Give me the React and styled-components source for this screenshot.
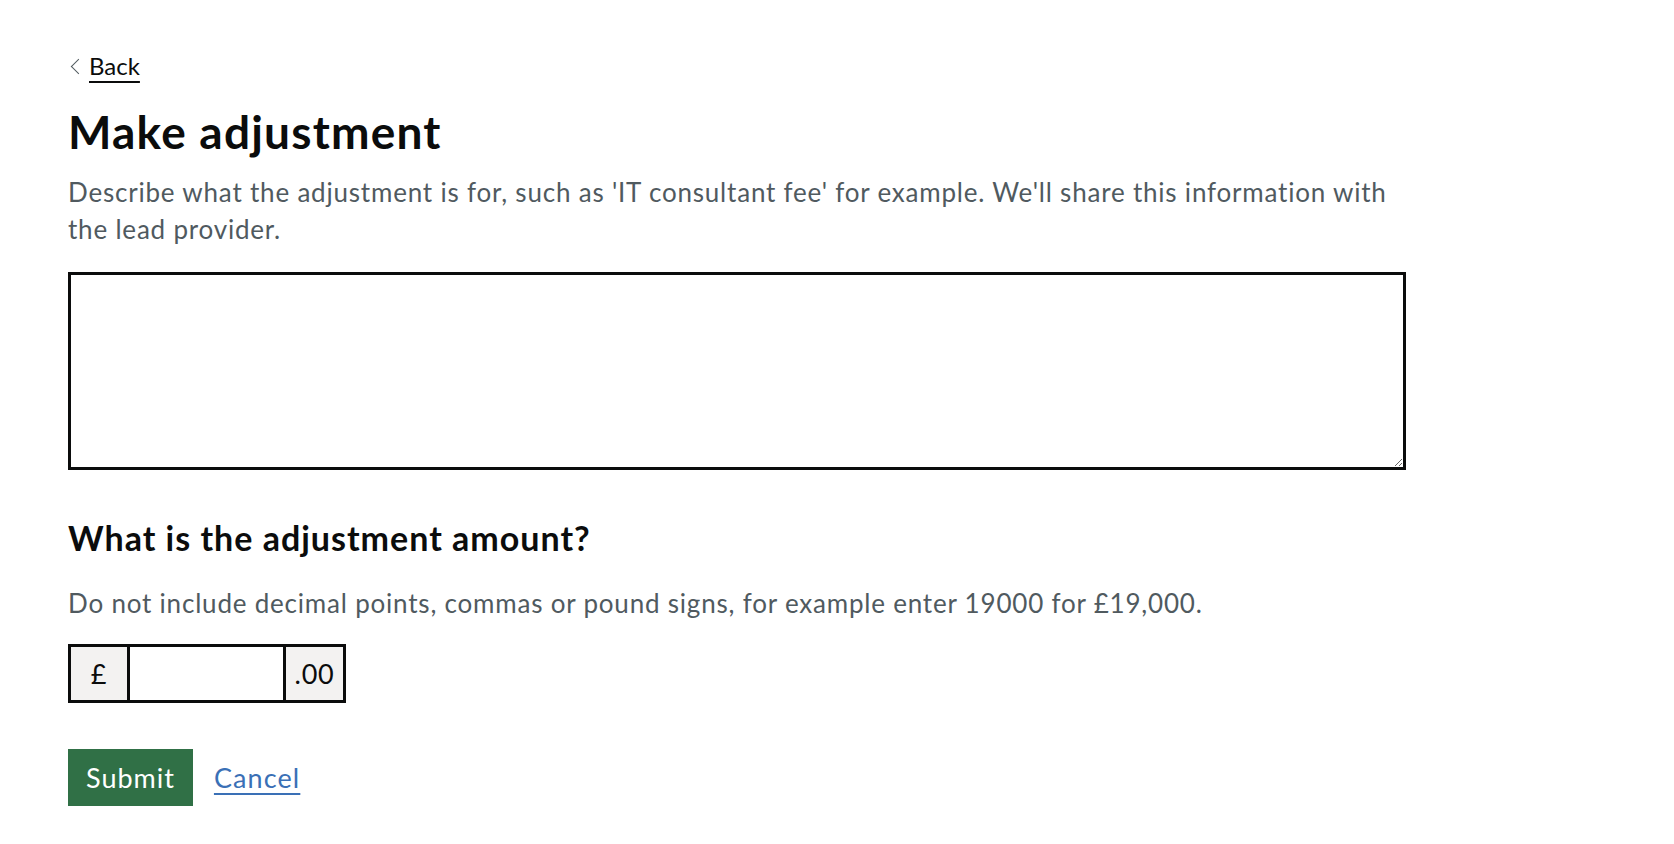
import React from "react";
import styled, { createGlobalStyle } from "styled-components";

const GlobalStyle = createGlobalStyle`
  html, body {
    margin: 0;
    padding: 0;
    background: #ffffff;
  }
  body {
    font-family: Lato, "Noto Sans", Arial, sans-serif;
    color: #0b0c0c;
  }
`;

const Page = styled.main`
  padding: 51px 0 0 68px;
  width: 1338px;
`;

const BackLink = styled.a`
  display: inline-block;
  position: relative;
  padding-left: 21px;
  font-size: 24px;
  line-height: 30px;
  color: #0b0c0c;
  text-decoration: underline;
  text-decoration-thickness: 2px;
  text-underline-offset: 6px;

  &::before {
    content: "";
    position: absolute;
    left: 5px;
    top: 10px;
    width: 10px;
    height: 10px;
    border-left: 1.5px solid #505a5f;
    border-bottom: 1.5px solid #505a5f;
    transform: rotate(45deg);
  }
`;

const Title = styled.h1`
  margin: 26px 0 0;
  font-size: 46px;
  line-height: 50px;
  font-weight: 700;
  letter-spacing: 1.2px;
`;

const Hint = styled.p`
  margin: ${({ $top }) => $top}px 0 0;
  font-size: 26px;
  line-height: 37px;
  letter-spacing: 0.8px;
  color: #505a5f;
`;

const TextArea = styled.textarea`
  display: block;
  box-sizing: border-box;
  width: 100%;
  height: 198px;
  margin-top: 24px;
  padding: 8px;
  border: 3px solid #0b0c0c;
  border-radius: 0;
  font-family: inherit;
  font-size: 26px;
  line-height: 37px;
  resize: vertical;
`;

const Question = styled.h2`
  margin: 48px 0 0;
  font-size: 34px;
  line-height: 40px;
  font-weight: 700;
  letter-spacing: 1px;
`;

const AmountRow = styled.div`
  display: flex;
  margin-top: 22px;
  height: 59px;
`;

const Affix = styled.div`
  box-sizing: border-box;
  width: ${({ $width }) => $width}px;
  height: 100%;
  display: flex;
  align-items: center;
  justify-content: center;
  border: 3px solid #0b0c0c;
  background: #f3f2f1;
  font-size: 27px;
  letter-spacing: 0.8px;
  color: #0b0c0c;
`;

const AmountInput = styled.input`
  box-sizing: border-box;
  width: 153px;
  height: 100%;
  margin: 0;
  padding: 0 8px;
  border: 3px solid #0b0c0c;
  border-left: 0;
  border-right: 0;
  border-radius: 0;
  font-family: inherit;
  font-size: 26px;
  outline: none;
`;

const Actions = styled.div`
  display: flex;
  align-items: flex-start;
  gap: 21px;
  margin-top: 46px;
`;

const SubmitButton = styled.button`
  height: 57px;
  padding: 0 18px;
  border: 0;
  border-radius: 0;
  background: #307046;
  box-shadow: 0 3px 0 #0a2915;
  color: #ffffff;
  font-family: inherit;
  font-size: 27px;
  letter-spacing: 1px;
  line-height: 57px;
  cursor: pointer;
`;

const CancelLink = styled.a`
  font-size: 27px;
  letter-spacing: 1.1px;
  line-height: 57px;
  color: #3a70b6;
  text-decoration: underline;
  text-decoration-thickness: 2px;
  text-underline-offset: 5px;
`;

export default function App() {
  return (
    <>
      <GlobalStyle />
      <Page>
        <BackLink href="#">Back</BackLink>
        <Title>Make adjustment</Title>
        <Hint $top={17}>
          Describe what the adjustment is for, such as 'IT consultant fee' for
          example. We'll share this information with the lead provider.
        </Hint>
        <TextArea aria-label="Adjustment description" />
        <Question>What is the adjustment amount?</Question>
        <Hint $top={27}>
          Do not include decimal points, commas or pound signs, for example
          enter 19000 for £19,000.
        </Hint>
        <AmountRow>
          <Affix $width={62}>£</Affix>
          <AmountInput aria-label="Adjustment amount" />
          <Affix $width={63}>.00</Affix>
        </AmountRow>
        <Actions>
          <SubmitButton>Submit</SubmitButton>
          <CancelLink href="#">Cancel</CancelLink>
        </Actions>
      </Page>
    </>
  );
}
